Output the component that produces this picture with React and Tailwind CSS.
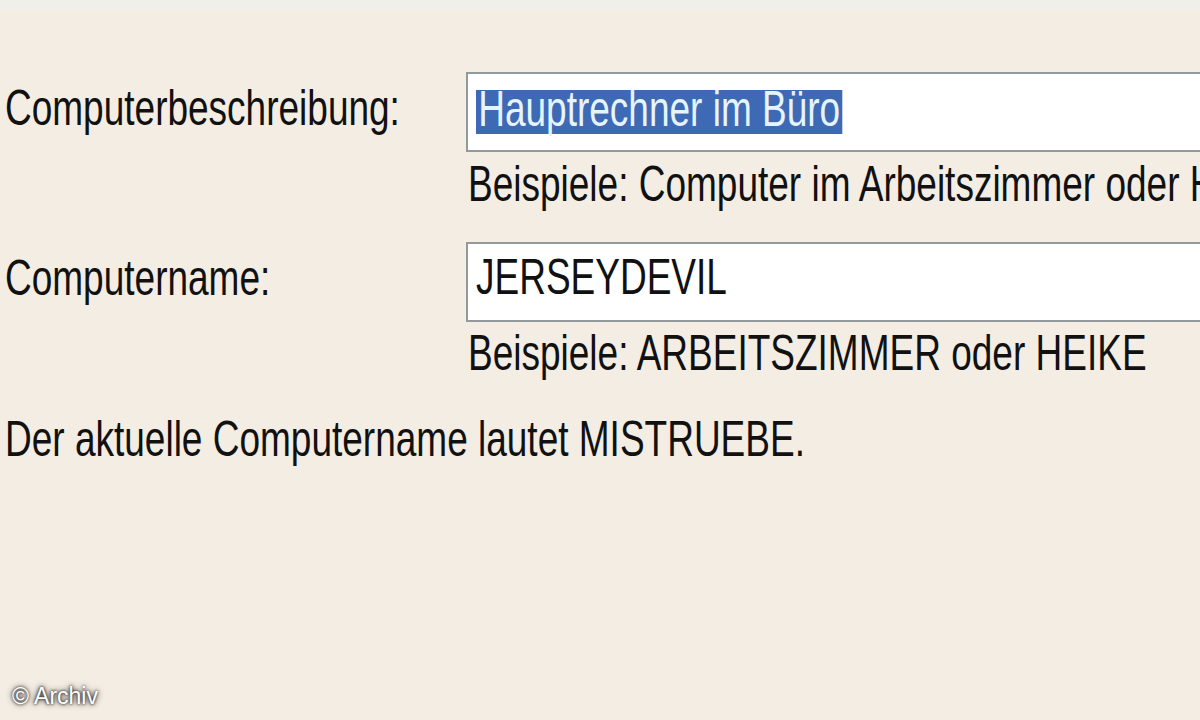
export default function App() {
  const txt = "inline-block origin-left scale-x-[0.74] whitespace-nowrap";
  return (
    <div
      className="relative w-[1200px] h-[720px] overflow-hidden bg-[#f4ede3] text-[#111] text-[50px] leading-none"
      style={{ fontFamily: '"Liberation Sans", Arial, sans-serif' }}
    >
      <div className="h-[10px] bg-[#f1efe9]" />
      <div className="pt-[62px] pl-[5px] grid grid-cols-[461px_1fr]">
        {/* Row 1 */}
        <div className="h-[80px] flex items-center pb-[9px]">
          <span className={txt}>Computerbeschreibung:</span>
        </div>
        <div className="h-[80px] w-[800px] border-2 border-[#939a9e] bg-white flex items-center pl-[8px]">
          <span className="inline-flex items-center h-[44px] bg-[#3e69b5] text-[#e6f4ff] px-[3px] pb-[6px] origin-left scale-x-[0.74] whitespace-nowrap">
            Hauptrechner im Büro
          </span>
        </div>
        <div />
        <div className="h-[90px] flex items-start pt-[7px] pl-[2px]">
          <span className={txt}>Beispiele: Computer im Arbeitszimmer oder H</span>
        </div>
        {/* Row 2 */}
        <div className="h-[80px] flex items-center pb-[9px]">
          <span className={txt}>Computername:</span>
        </div>
        <div className="h-[80px] w-[800px] border-2 border-[#939a9e] bg-white flex items-center pl-[8px] pb-[10px]">
          <span className={txt}>JERSEYDEVIL</span>
        </div>
        <div />
        <div className="h-[60px] flex items-start pt-[6px] pl-[2px]">
          <span className={txt}>Beispiele: ARBEITSZIMMER oder HEIKE</span>
        </div>
        <div className="col-span-2 pt-[32px]">
          <span className={txt}>Der aktuelle Computername lautet MISTRUEBE.</span>
        </div>
      </div>
      <div
        className="absolute left-[12px] top-[685px] text-[23px] text-white"
        style={{ textShadow: "0 0 3px #000, 0 0 6px #222" }}
      >
        © Archiv
      </div>
    </div>
  );
}
